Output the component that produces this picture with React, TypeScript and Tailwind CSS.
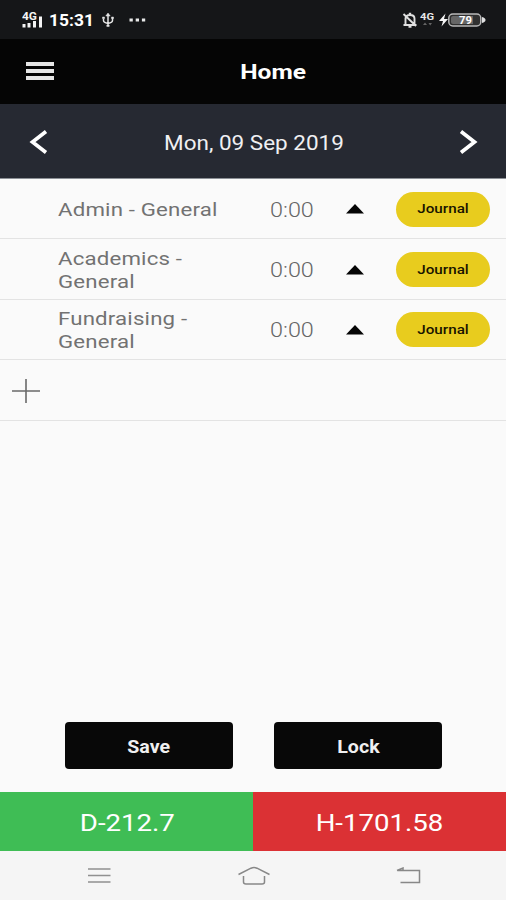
import type {ReactNode} from "react";
import clsx from "clsx";

interface Entry {
    title: string,
    time: string
}

const entries: Entry[] = [
    {title: "Admin - General", time: "0:00"},
    {title: "Academics - General", time: "0:00"},
    {title: "Fundraising - General", time: "0:00"},
]

// wide lettering, stretched horizontally around its origin
function Wide({children, className = "scale-x-[1.17]"}: { children: ReactNode, className?: string }) {
    return <span className={clsx("inline-block whitespace-nowrap", className)}>{children}</span>
}

function StatusBar() {
    return <div className="flex h-[39px] shrink-0 items-center justify-between bg-[#151618] pl-[22px] pr-[20px] text-white">
        <div className="flex items-center">
            <svg width="22" height="18" viewBox="0 0 22 18" fill="#f4f4f4">
                <text x="0" y="8.500" fontSize="10" fontWeight="700" textLength="15" lengthAdjust="spacingAndGlyphs">4G</text>
                <rect x="0.5" y="13" width="3" height="3.5"/>
                <rect x="5.5" y="12" width="3" height="4.5"/>
                <rect x="11" y="10" width="3" height="6.5"/>
                <rect x="17" y="5.5" width="3" height="11"/>
            </svg>
            <Wide className="ml-[5px] mt-[2px] w-[41px] origin-left scale-x-[1.09] text-[16px] leading-[20px] font-bold">15:31</Wide>
            <svg className="ml-[11px]" width="14" height="16" viewBox="0 0 14 16" fill="none" stroke="#e4e4e4" strokeWidth="1.5">
                <path d="M7 3v10M2.5 6.5v2q0 2 4.500 3M11.500 6v2.500q0 2-4.500 3"/>
                <path d="M4.800 4L7 1l2.200 3zM5.800 13h2.400v1.500H5.800zM1.500 5h2v1.500h-2zM10.500 5h2v1.500h-2z" fill="#e4e4e4" strokeWidth="0.500"/>
            </svg>
            <svg className="ml-[14px]" width="17" height="4" viewBox="0 0 17 4" fill="#e8e8e8">
                <rect x="0.500" y="0.500" width="3.300" height="3"/>
                <rect x="6.700" y="0.500" width="3.300" height="3"/>
                <rect x="12.900" y="0.500" width="3.300" height="3"/>
            </svg>
        </div>
        <div className="flex items-center">
            <svg width="16" height="16" viewBox="0 0 16 16" fill="none" stroke="#e0e0e0" strokeWidth="1.900">
                <path d="M3.500 12.500V6.500Q3.500 3 8 3t4.500 3.500v6M1.500 13h13M6.500 14.800h3M6.800 1.700h2.400M1.500 2l12.500 12"/>
            </svg>
            <svg className="ml-[2px]" width="16" height="18" viewBox="0 0 16 18" fill="#e8e8e8">
                <text x="0" y="9" fontSize="9" fontWeight="700" textLength="14" lengthAdjust="spacingAndGlyphs">4G</text>
                <path d="M3 14l2-2.500L7 14zM8.500 12h3.500l-1.800 2.500z" fill="#666"/>
            </svg>
            <svg className="ml-[3px]" width="47" height="16" viewBox="0 0 47 16">
                <path d="M6.500 1.500L0 9h4l-1.500 5.500L9 7H5z" fill="#f5f5f5"/>
                <rect x="9.800" y="2" width="32" height="12" rx="4" fill="#303030" stroke="#b8b8b8" strokeWidth="1.500"/>
                <path d="M14 4h20v8H14q-2 0-2-2V6q0-2 2-2z" fill="#666"/>
                <path d="M43 5q3.500 1 3.500 3T43 11z" fill="#e0e0e0"/>
                <text x="20" y="11.800" fontSize="10" fontWeight="700" fill="#fff" textLength="13" lengthAdjust="spacingAndGlyphs">79</text>
            </svg>
        </div>
    </div>
}

function Header() {
    return <header className="relative flex h-[65px] shrink-0 items-center justify-center bg-[#050505] text-white">
        <button className="absolute left-[26px] top-[23px] flex w-[28px] flex-col gap-[3px]">
            <span className="h-[4px] bg-[#e6e6e6]"/>
            <span className="h-[4px] bg-[#e6e6e6]"/>
            <span className="h-[4px] bg-[#e6e6e6]"/>
        </button>
        <h1 className="pl-[40px] pt-[3px] text-[21px] font-bold"><Wide>Home</Wide></h1>
    </header>
}

function DateBar() {
    return <div className="flex h-[75px] shrink-0 items-center justify-between border-b border-[#8c9096] bg-[#262932] pl-[29px] pr-[28px] pt-[2px] text-white">
        <svg width="19" height="26" viewBox="0 0 19 26" fill="none" stroke="#fff" strokeWidth="3.700">
            <path d="M17 2.500L3.500 13 17 23.500"/>
        </svg>
        <Wide className="scale-x-[1.125] pt-px text-[20px] text-[#f0f0f2]">Mon, 09 Sep 2019</Wide>
        <svg width="19" height="26" viewBox="0 0 19 26" fill="none" stroke="#fff" strokeWidth="3.700">
            <path d="M2 2.500L15.500 13 2 23.500"/>
        </svg>
    </div>
}

function EntryRow({title, time}: Entry) {
    return <li className="flex h-[60.4px] items-center border-b-[1.5px] border-[#e3e3e3] pl-[58px] pr-[16px] text-[#727272]">
        <div className="w-[212px] pt-[3px]">
            <div className="w-[145px] origin-left scale-x-[1.17] text-[19px] leading-[22.5px] tracking-[0.15px]">{title}</div>
        </div>
        <Wide className="origin-left scale-x-[1.17] pt-[2px] text-[20px] font-light text-[#666]">{time}</Wide>
        <svg className="ml-auto mt-px" width="18" height="10" viewBox="0 0 18 10"><path d="M9 0l9 9.500H0z" fill="#050505"/></svg>
        <button className="ml-[32px] mt-px h-[35px] w-[94px] rounded-full bg-[#e8cc1e] text-[13px] font-medium text-[#181400]">
            <Wide>Journal</Wide>
        </button>
    </li>
}

function ActionButton({children}: { children: string }) {
    return <button className="h-[47px] w-[168px] rounded-[4px] bg-[#080808] pt-px text-[18px] font-bold text-[#f0f0f0]">
        <Wide className="scale-x-[1.09]">{children}</Wide>
    </button>
}

function NavBar() {
    return <nav className="flex h-[49px] shrink-0 items-center bg-[#f5f5f5] pl-[87px] pt-px">
        <svg width="24" height="18" viewBox="0 0 24 18" stroke="#909090" strokeWidth="1.500">
            <path d="M1 2h22.500M1 8.500h22.500M1 15h22.500"/>
        </svg>
        <svg className="ml-[126px]" width="34" height="20" viewBox="0 0 34 20" fill="none" stroke="#888" strokeWidth="1.500">
            <path d="M1.500 8.500L14 2.200q3-1.400 6 0l12.500 6.300M6.500 10v6q0 2 2.500 2h16q2.500 0 2.500-2v-6"/>
        </svg>
        <svg className="ml-[125px]" width="26" height="18" viewBox="0 0 26 18" fill="none" stroke="#888" strokeWidth="1.500">
            <path d="M1.500 3.500h22v12h-19M1 3.500L7 1v2.500"/>
        </svg>
    </nav>
}

export default function App() {
    return <div className="flex h-[900px] w-[506px] flex-col overflow-hidden bg-[#fafafa] font-[Roboto,sans-serif]">
        <StatusBar/>
        <Header/>
        <DateBar/>
        <ul>
            {entries.map((entry) => <EntryRow key={entry.title} {...entry}/>)}
            <li className="flex h-[60.4px] items-center border-b-[1.5px] border-[#e3e3e3] pl-[12px] pt-[2px]">
                <svg width="28" height="24" viewBox="0 0 28 24" stroke="#6a6a6a" strokeWidth="1.600"><path d="M0 12h28M14 0v24"/></svg>
            </li>
        </ul>
        <div className="mt-auto mb-[23px] flex gap-[41px] pl-[65px]">
            <ActionButton>Save</ActionButton>
            <ActionButton>Lock</ActionButton>
        </div>
        <div className="grid h-[59px] shrink-0 grid-cols-2 text-[24px] text-white">
            <div className="flex items-center justify-center bg-[#3fbd55] pl-px pt-[2px]"><Wide className="scale-x-[1.15]">D-212.7</Wide></div>
            <div className="flex items-center justify-center bg-[#db3134] pl-px pt-[2px]"><Wide className="scale-x-[1.15]">H-1701.58</Wide></div>
        </div>
        <NavBar/>
    </div>
}
